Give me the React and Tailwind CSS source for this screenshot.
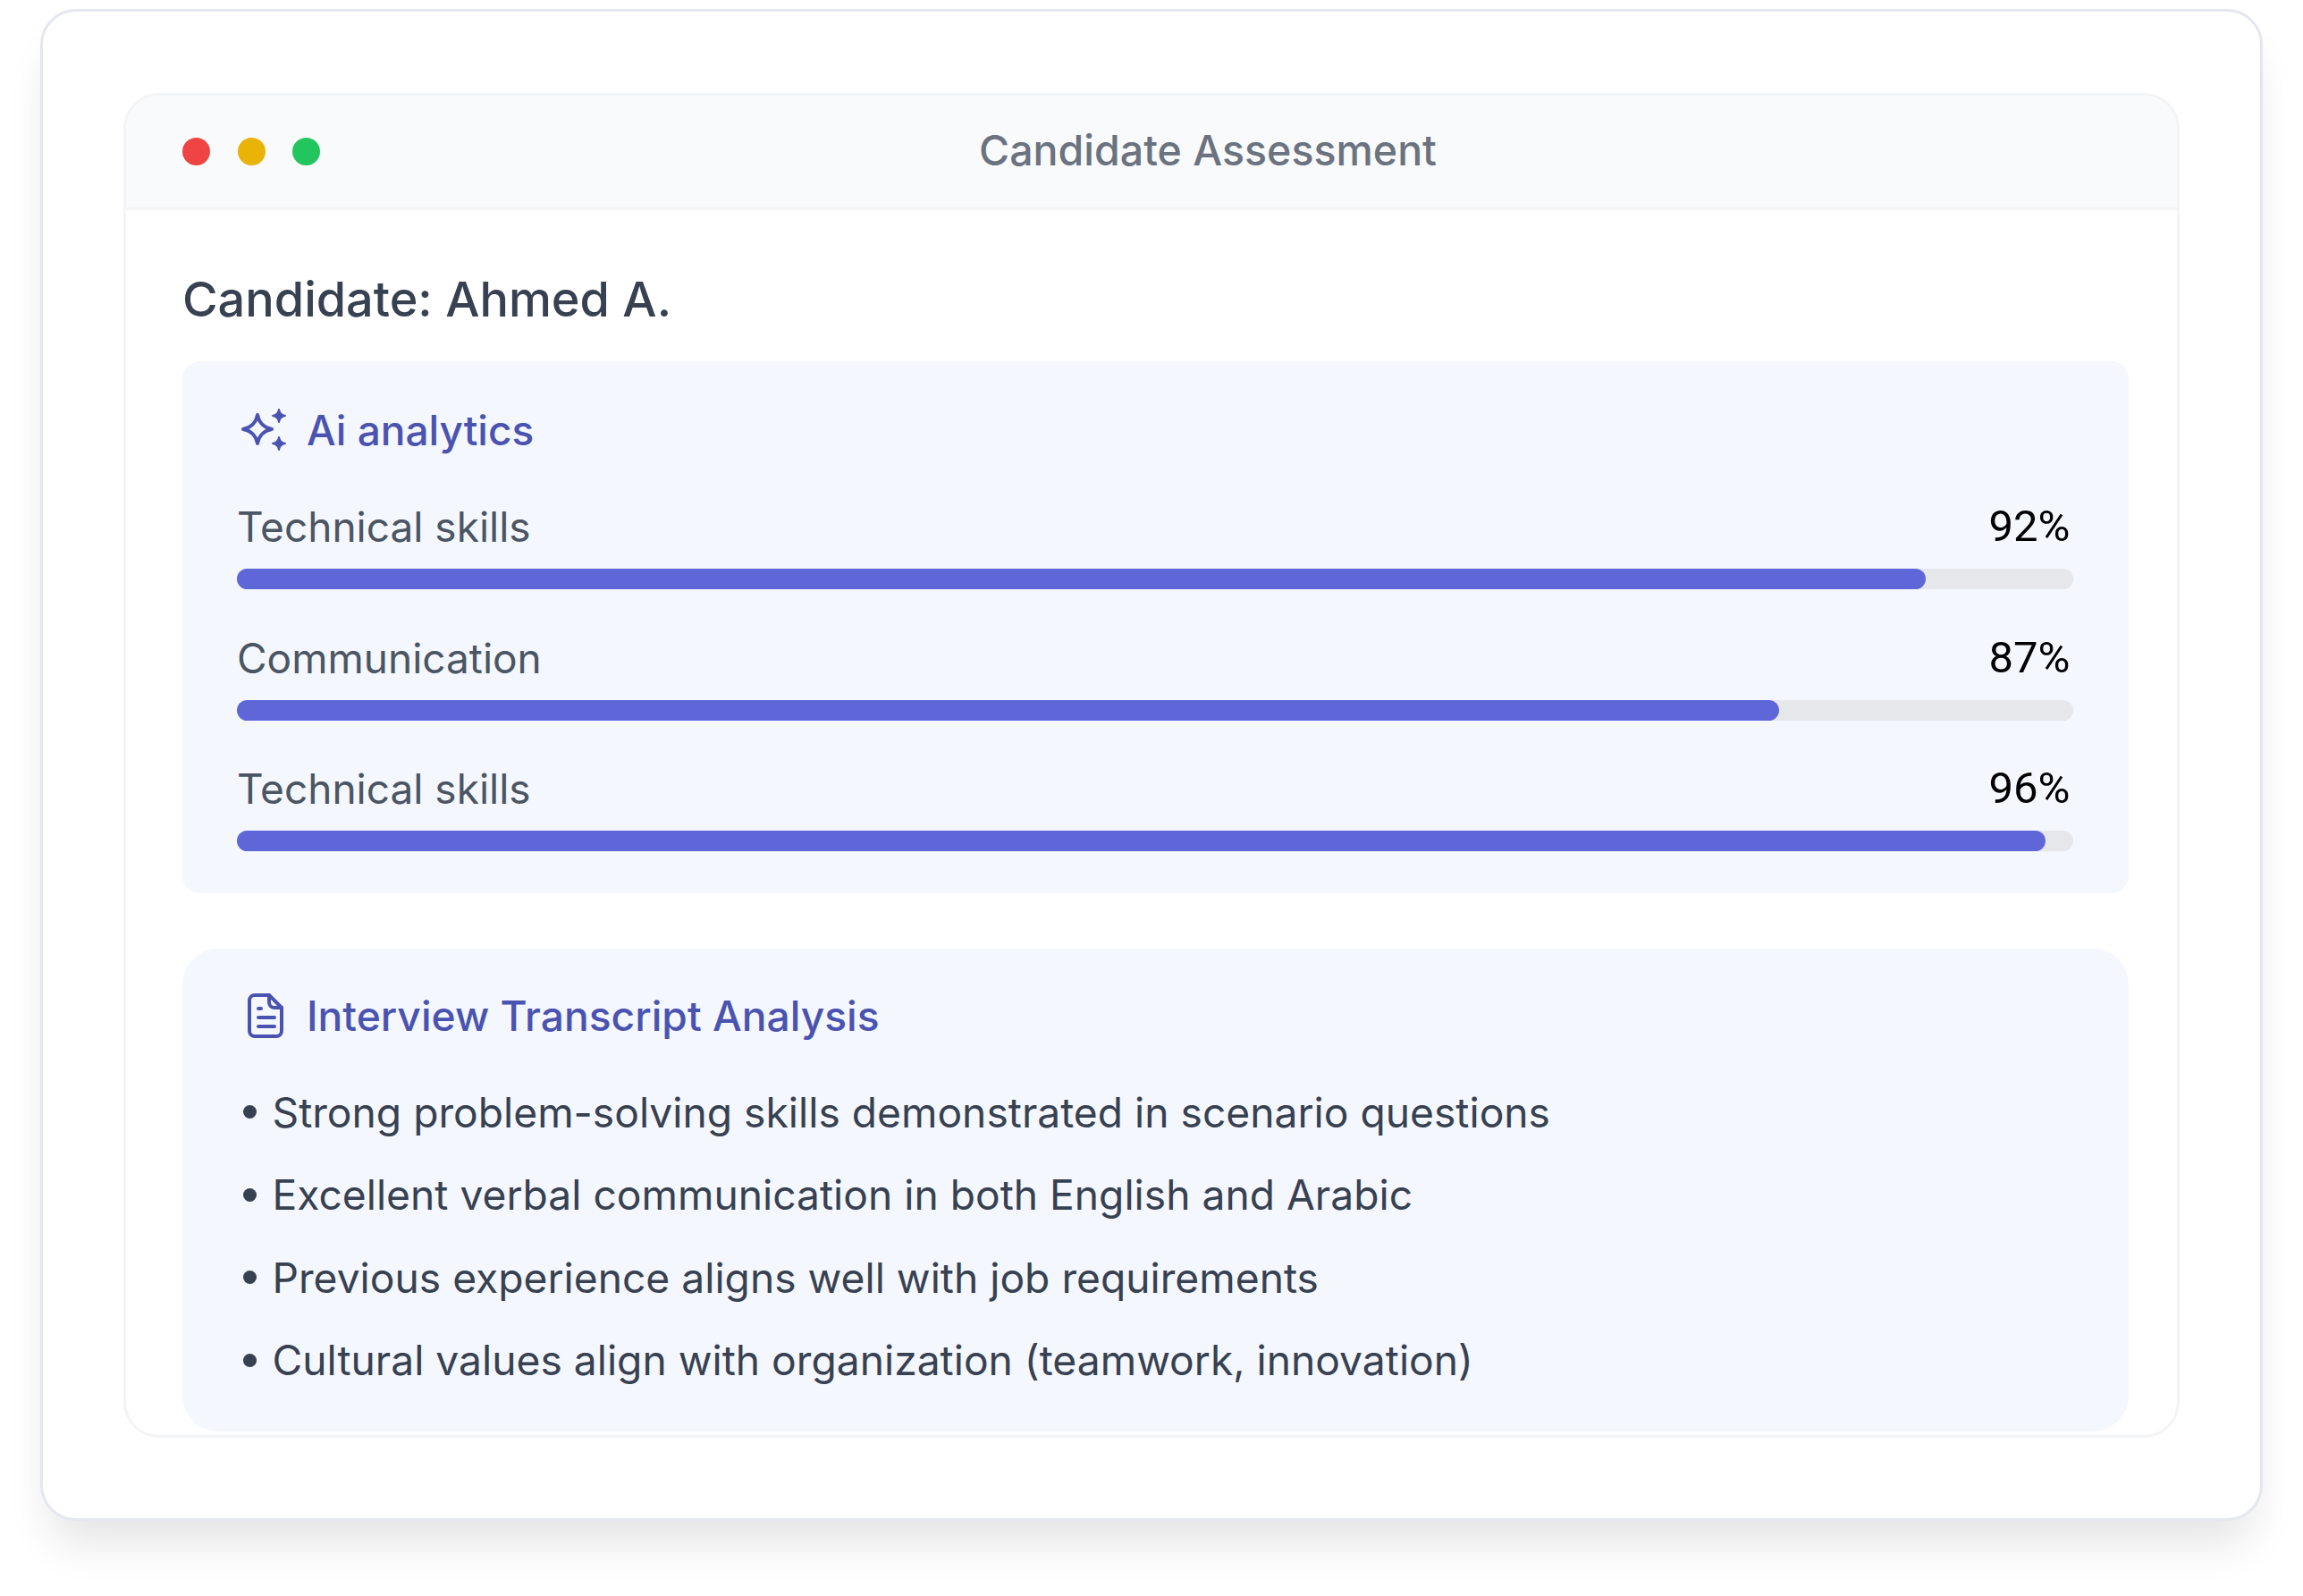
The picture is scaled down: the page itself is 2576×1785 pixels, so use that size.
import React from "react";

const skills = [
  { label: "Technical skills", value: "92%", bar: "w-[92%]" },
  { label: "Communication", value: "87%", bar: "w-[84%]" },
  { label: "Technical skills", value: "96%", bar: "w-[98.5%]" },
];

const points = [
  "Strong problem-solving skills demonstrated in scenario questions",
  "Excellent verbal communication in both English and Arabic",
  "Previous experience aligns well with job requirements",
  "Cultural values align with organization (teamwork, innovation)",
];

const SparkleIcon = () => (
  <svg viewBox="0 0 55 55" className="w-[55px] h-[55px] shrink-0" fill="none">
    <path
      d="M18 10C19.5 18.5 25.5 24.5 34 26C25.5 27.5 19.5 33.5 18 42C16.5 33.5 10.5 27.5 2 26C10.5 24.5 16.5 18.5 18 10Z"
      stroke="#4b53b0"
      strokeWidth="4"
      strokeLinejoin="round"
    />
    <path
      d="M42 4C42.6 8 45 10.4 49 11C45 11.6 42.6 14 42 18C41.4 14 39 11.6 35 11C39 10.4 41.4 8 42 4Z"
      fill="#4b53b0"
      stroke="#4b53b0"
      strokeWidth="2"
      strokeLinejoin="round"
    />
    <path
      d="M42 35C42.6 39 45 41.4 49 42C45 42.6 42.6 45 42 49C41.4 45 39 42.6 35 42C39 41.4 41.4 39 42 35Z"
      fill="#4b53b0"
      stroke="#4b53b0"
      strokeWidth="2"
      strokeLinejoin="round"
    />
  </svg>
);

const DocIcon = () => (
  <svg viewBox="0 0 44 54" className="w-[44px] h-[54px] shrink-0" fill="none" stroke="#4b53b0" strokeWidth="4" strokeLinecap="round" strokeLinejoin="round">
    <path d="M10 4H26L40 18V44a6 6 0 0 1-6 6H10a6 6 0 0 1-6-6V10a6 6 0 0 1 6-6Z" />
    <path d="M26 4V12a6 6 0 0 0 6 6H40" />
    <path d="M14 19H17M14 29H32M14 39H32" />
  </svg>
);

const App = () => {
  return (
    <div className="w-[2576px] h-[1785px] bg-white pl-[45px] pt-[10px] font-['Inter',sans-serif] overflow-hidden">
      <div className="w-[2486px] h-[1691px] bg-white rounded-[40px] border-[3px] border-[#e5e7ef] pl-[90px] pt-[91px] shadow-[0_36px_50px_-12px_rgba(0,0,0,0.11)]">
        <div className="w-[2300px] h-[1504px] rounded-[40px] border-[3px] border-[#f3f4f6] overflow-hidden">
          <div className="h-[128px] flex items-center bg-[#f9fafb] border-b-[3px] border-[#f3f4f6] pl-[63px] pr-[54px]">
            <div className="flex gap-[30.5px]">
              <div className="w-[31px] h-[31px] rounded-full bg-[#ef4444]" />
              <div className="w-[31px] h-[31px] rounded-full bg-[#eab308]" />
              <div className="w-[31px] h-[31px] rounded-full bg-[#22c55e]" />
            </div>
            <p className="flex-1 text-center pr-[37px] mb-[3px] text-[46.5px] leading-[60px] font-medium text-[#6b7280]">
              Candidate Assessment
            </p>
          </div>
          <div className="pl-[63px] pr-[54px] pt-[70px]">
            <h1 className="h-[60px] text-[54px] leading-[60px] font-medium text-[#374151]">
              Candidate: Ahmed A.
            </h1>
            <div className="mt-[39px] rounded-[20px] bg-[#f4f7fe] pt-[49px] pb-[46.5px] pl-[61px] pr-[62.5px]">
              <div className="flex items-center h-[56px] gap-[18px]">
                <div className="ml-[5px]">
                  <SparkleIcon />
                </div>
                <h2 className="text-[46px] leading-[56px] font-medium text-[#4b53b0]">
                  Ai analytics
                </h2>
              </div>
              <div className="mt-[53px] flex flex-col gap-[49.5px]">
                {skills.map((skill, i) => (
                  <div key={i}>
                    <div className="flex justify-between items-center h-[54px] pr-[3px] text-[46px] leading-[54px]">
                      <span className="text-[#4b5563]">{skill.label}</span>
                      <span className="text-black text-[49px] font-['Roboto',sans-serif]">{skill.value}</span>
                    </div>
                    <div className="mt-[20px] h-[23px] rounded-full bg-[#e5e7eb]">
                      <div className={`${skill.bar} h-full rounded-full bg-[#5f67d8]`} />
                    </div>
                  </div>
                ))}
              </div>
            </div>
            <div className="mt-[62px] rounded-[40px] bg-[#f4f7fe] pt-[47px] pb-[51.5px] pl-[67.5px] pr-[61px]">
              <div className="flex items-center h-[56px] gap-[24px]">
                <div className="ml-[3.5px]">
                  <DocIcon />
                </div>
                <h2 className="text-[46.2px] leading-[56px] font-medium text-[#4b53b0]">
                  Interview Transcript Analysis
                </h2>
              </div>
              <ul className="mt-[52px] flex flex-col gap-[36.5px]">
                {points.map((point) => (
                  <li key={point} className="flex items-center gap-[18px] h-[56px] text-[46.2px] leading-[56px] text-[#374151]">
                    <span className="w-[15px] h-[15px] rounded-full bg-[#374151] shrink-0" />
                    {point}
                  </li>
                ))}
              </ul>
            </div>
          </div>
        </div>
      </div>
    </div>
  );
};

export default App;
